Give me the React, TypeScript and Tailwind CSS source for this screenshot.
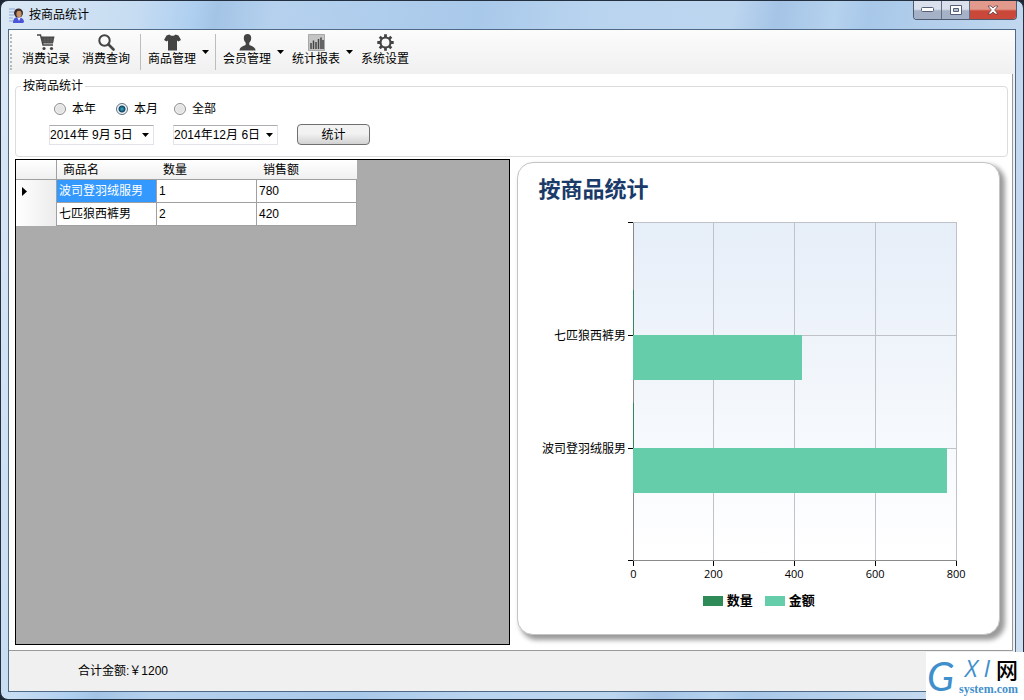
import React from 'react';

interface Product {
  name: string;
  count: number;
  amount: number;
}

interface ToolItem {
  label: string;
  icon: React.ReactNode;
  hasMenu?: boolean;
  separatorAfter?: boolean;
}

const products: Product[] = [
  { name: '波司登羽绒服男', count: 1, amount: 780 },
  { name: '七匹狼西裤男', count: 2, amount: 420 },
];

const AppIcon = () => (
  <svg width="16" height="16" viewBox="0 0 16 16" aria-hidden="true">
    <path d="M0 2h6M0 5h5M0 8h5M0 11h4M0 14h5" stroke="#8ea9d8" strokeWidth="1.2" />
    <path d="M4 16c0-4 2-6 5-6s6 2 6 5l-1 1z" fill="#4a55d8" />
    <path d="M8 10l2 4 2-4z" fill="#eef" />
    <circle cx="9.5" cy="6" r="4.5" fill="#3b2a2a" />
    <ellipse cx="10" cy="7" rx="2.6" ry="3.2" fill="#c68f62" />
  </svg>
);

const CartIcon = () => (
  <svg width="18" height="17" viewBox="0 0 18 17" aria-hidden="true">
    <path d="M0 1h3.5l2.5 10h10" fill="none" stroke="#444" strokeWidth="1.4" />
    <path d="M4 2.5h13.5L16 9.5H6z" fill="#444" />
    <path d="M5 5h12M5.500 7.200h11M8 3v6M11 3v6M14 3v6" stroke="#777" strokeWidth=".5" />
    <circle cx="7" cy="14.500" r="1.600" fill="#444" />
    <circle cx="14.500" cy="14.500" r="1.600" fill="#444" />
  </svg>
);

const SearchIcon = () => (
  <svg width="17" height="17" viewBox="0 0 17 17" fill="none" stroke="#444" aria-hidden="true">
    <circle cx="6.500" cy="6.500" r="5.200" strokeWidth="2" />
    <path d="M10.500 10.500l5 5" strokeWidth="2.600" strokeLinecap="round" />
  </svg>
);

const ShirtIcon = () => (
  <svg width="17" height="17" viewBox="0 0 17 17" fill="#444" aria-hidden="true">
    <path d="M5.500.5c1 1.700 5 1.700 6 0l3 1L17 6l-2.700 1.600-1.300-1V16.500H4V6.600l-1.300 1L0 6l2.500-4.500z" />
  </svg>
);

const UserIcon = () => (
  <svg width="17" height="17" viewBox="0 0 17 17" fill="#444" aria-hidden="true">
    <path d="M8.500 0c2.400 0 3.700 1.600 3.700 4 0 2-.7 3.700-1.900 4.700v2c1 1.200 6.200 1.600 6.200 5.800H.5c0-4.200 5.200-4.600 6.200-5.800v-2C5.500 7.700 4.800 6 4.800 4c0-2.400 1.300-4 3.700-4z" />
  </svg>
);

const ReportIcon = () => (
  <svg width="17" height="17" viewBox="0 0 17 17" aria-hidden="true">
    <path d="M.5.500h16v16H.5z" fill="#c4c4c4" stroke="#a8a8a8" />
    <path d="M3 9v6M5.500 6.500V15M8 8v7M10.500 5v10M13 3.500V15M15 6v9" stroke="#444" strokeWidth="1.500" />
  </svg>
);

const GearIcon = () => (
  <svg width="17" height="17" viewBox="0 0 17 17" fill="none" stroke="#444" aria-hidden="true">
    <circle cx="8.500" cy="8.500" r="5" strokeWidth="2.200" />
    <path
      d="M8.500.3v3M8.500 13.700v3M.3 8.500h3M13.700 8.500h3M2.700 2.700l2.100 2.100M12.200 12.200l2.100 2.100M2.700 14.300l2.100-2.100M12.200 4.800l2.100-2.100"
      strokeWidth="2.800"
    />
  </svg>
);

const DownArrow = () => (
  <svg width="7" height="4" viewBox="0 0 7 4" aria-hidden="true">
    <path d="M0 0h7L3.500 4z" fill="#000" />
  </svg>
);

const tools: ToolItem[] = [
  { label: '消费记录', icon: <CartIcon /> },
  { label: '消费查询', icon: <SearchIcon />, separatorAfter: true },
  { label: '商品管理', icon: <ShirtIcon />, hasMenu: true, separatorAfter: true },
  { label: '会员管理', icon: <UserIcon />, hasMenu: true },
  { label: '统计报表', icon: <ReportIcon />, hasMenu: true },
  { label: '系统设置', icon: <GearIcon /> },
];

const TitleBar = () => (
  <header className="flex h-7 items-start justify-between pl-2">
    <div className="flex h-7 items-center gap-1">
      <AppIcon />
      <h1 className="text-xs">按商品统计</h1>
    </div>
    <div className="mr-1.5 flex h-[19px] overflow-hidden rounded-b border border-t-0 border-[#4d5a70]">
      <button
        type="button"
        aria-label="最小化"
        className="flex w-7 items-center justify-center border-r border-[#5f6c83] bg-linear-to-b from-[#dbe1ec] from-45% to-[#a5b1c7] to-55%"
      >
        <svg width="13" height="6" viewBox="0 0 13 6">
          <rect x=".5" y=".5" width="12" height="4" rx="1" fill="#fff" stroke="#54607a" />
        </svg>
      </button>
      <button
        type="button"
        aria-label="最大化"
        className="flex w-7 items-center justify-center border-r border-[#5f6c83] bg-linear-to-b from-[#dbe1ec] from-45% to-[#a5b1c7] to-55%"
      >
        <svg width="12" height="10" viewBox="0 0 12 10">
          <path d="M.5.500h11v9H.5z" fill="#fff" stroke="#54607a" />
          <path d="M3.500 3.500h5v3h-5z" fill="#b7c1d4" stroke="#54607a" />
        </svg>
      </button>
      <button
        type="button"
        aria-label="关闭"
        className="flex w-[46px] items-center justify-center bg-linear-to-b from-[#e29a8d] from-45% to-[#c9483a] to-55%"
      >
        <svg width="12" height="10" viewBox="0 0 12 10">
          <path d="M1 1h3l2 2 2-2h3L7.700 5 11 9H8L6 7 4 9H1l3.300-4z" fill="#fff" stroke="#6b4048" strokeWidth=".8" />
        </svg>
      </button>
    </div>
  </header>
);

const Toolbar = () => (
  <nav className="flex h-[44px] items-stretch bg-linear-to-b from-[#fcfcfc] to-[#f0f0f0] pl-px">
    <div className="my-1 mr-1 w-px border-l-2 border-dotted border-[#b8b8b8]" />
    {tools.map((tool) => (
      <React.Fragment key={tool.label}>
        <button type="button" className={`flex items-center ${tool.hasMenu ? 'pr-0.5' : ''}`}>
          <span className="flex w-[60px] flex-col items-center pb-1">
            {tool.icon}
            <span className="text-xs leading-4">{tool.label}</span>
          </span>
          {tool.hasMenu && <DownArrow />}
        </button>
        {tool.separatorAfter && <div className="my-1 mr-px ml-1 w-px bg-[#bdbdbd]" />}
      </React.Fragment>
    ))}
  </nav>
);

const RangeRadio = ({ label, checked = false }: { label: string; checked?: boolean }) => (
  <label className="flex items-center gap-1.5">
    <input
      type="radio"
      name="range"
      defaultChecked={checked}
      className="size-3 appearance-none rounded-full border border-[#8e8f8f] bg-[#e4e4e4] shadow-[inset_0_0_0_1px_#f6f6f6] checked:border-[#5b7283] checked:bg-[radial-gradient(circle,#3fb0d8_0,#12435e_3px,#e8eef2_4px)]"
    />
    {label}
  </label>
);

const DateField = ({ label, value }: { label: string; value: string }) => (
  <div className="flex h-5 w-[105px] items-center border border-[#e2e3ea] border-t-[#abadb3] pr-1">
    <input type="text" aria-label={label} defaultValue={value} className="w-0 flex-1 outline-none" />
    <button type="button" aria-label={`选择${label}`}>
      <DownArrow />
    </button>
  </div>
);

const FilterBox = () => (
  <fieldset className="rounded border border-[#dcdcdc] pb-[11px] pl-[33px]">
    <legend className="-ml-7 px-0.5 leading-4">按商品统计</legend>
    <div className="mt-[7px] flex h-4 items-center pl-[5px]">
      <div className="mr-5">
        <RangeRadio label="本年" />
      </div>
      <div className="mr-4">
        <RangeRadio label="本月" checked />
      </div>
      <RangeRadio label="全部" />
    </div>
    <div className="mt-[7px] flex items-center gap-[19px]">
      <DateField label="开始日期" value="2014年 9月 5日" />
      <DateField label="结束日期" value="2014年12月 6日" />
      <button
        type="button"
        className="h-[21px] w-[73px] rounded-sm border border-[#707070] bg-linear-to-b from-[#f2f2f2] from-45% to-[#d2d2d2]"
      >
        统计
      </button>
    </div>
  </fieldset>
);

const ProductTable = () => (
  <div className="border border-black bg-[#ababab]">
    <table className="w-[341px] table-fixed border-separate border-spacing-0 text-left">
      <colgroup>
        <col className="w-[41px]" />
        <col />
        <col />
        <col />
      </colgroup>
      <thead>
        <tr className="h-5 bg-linear-to-b from-white to-[#efefef]">
          <td className="border-r border-b border-[#a0a0a0]" />
          {['商品名', '数量', '销售额'].map((title) => (
            <th key={title} scope="col" className="border-b border-[#a0a0a0] p-0 pl-1.5 font-normal">
              {title}
            </th>
          ))}
        </tr>
      </thead>
      <tbody>
        {products.map((product, index) => (
          <tr key={product.name} className="h-[23px] bg-white">
            <td className="border-r border-[#a0a0a0] bg-linear-to-r from-white to-[#ececec] p-0 pl-1.5">
              {index === 0 && (
                <svg width="5" height="9" viewBox="0 0 5 9" aria-hidden="true">
                  <path d="M0 0l5 4.500L0 9z" fill="#000" />
                </svg>
              )}
            </td>
            <td
              className={`border-r border-b border-[#a0a0a0] p-0 pl-0.5 whitespace-nowrap ${
                index === 0 ? 'bg-[#3399ff] text-white' : ''
              }`}
            >
              {product.name}
            </td>
            <td className="border-r border-b border-[#a0a0a0] p-0 pl-0.5">{product.count}</td>
            <td className="border-r border-b border-[#a0a0a0] p-0 pl-0.5">{product.amount}</td>
          </tr>
        ))}
      </tbody>
    </table>
  </div>
);

const PLOT = { left: 115, top: 15, width: 323, height: 338, max: 800 };
const ticks = [0, 200, 400, 600, 800];

const BarChart = () => {
  const rows = [...products].reverse();
  const band = PLOT.height / 3;
  const bottom = PLOT.top + PLOT.height;
  const right = PLOT.left + PLOT.width;
  const scale = (value: number): number => (value / PLOT.max) * PLOT.width;

  return (
    <svg viewBox="0 0 481 378" className="block w-full" shapeRendering="crispEdges" role="img" aria-label="按商品统计">
      <defs>
        <linearGradient id="plotFill" x1="0" y1="0" x2="0" y2="1">
          <stop offset="0" stopColor="#e6eef8" />
          <stop offset="1" stopColor="#ffffff" />
        </linearGradient>
      </defs>
      <rect x={PLOT.left} y={PLOT.top} width={PLOT.width} height={PLOT.height} fill="url(#plotFill)" />
      {ticks.map((tick) => {
        const x = Math.floor(PLOT.left + scale(tick)) + 0.5;
        return (
          <g key={tick}>
            <line x1={x} x2={x} y1={PLOT.top} y2={bottom} stroke={tick === 0 ? '#8a8a8a' : '#bfc2c8'} />
            <line x1={x} x2={x} y1={bottom} y2={bottom + 6} stroke="#000" />
            <text x={x} y={bottom + 18} textAnchor="middle" className="font-['Open_Sans',sans-serif] text-[11px]">
              {tick}
            </text>
          </g>
        );
      })}
      {[0, 1, 2, 3].map((line) => {
        const y = Math.ceil(PLOT.top + band * line) + 0.5;
        return (
          <g key={line}>
            <line x1={PLOT.left} x2={right + 1} y1={y} y2={y} stroke={line === 3 ? '#8a8a8a' : '#bfc2c8'} />
            <line x1={PLOT.left - 5} x2={PLOT.left} y1={y} y2={y} stroke="#000" />
          </g>
        );
      })}
      {rows.map((row, index) => {
        const y = Math.ceil(PLOT.top + band * (index + 1));
        return (
          <g key={row.name}>
            <rect x={PLOT.left} y={y - 45} width={Math.max(1, scale(row.count))} height="45" fill="#2e8b57" />
            <rect x={PLOT.left} y={y} width={scale(row.amount)} height="45" fill="#66cdaa" />
            <text x={PLOT.left - 7} y={y + 5} textAnchor="end" className="text-xs">
              {row.name}
            </text>
          </g>
        );
      })}
    </svg>
  );
};

const ChartCard = () => (
  <section className="mt-[3px] mr-2 mb-2.5 rounded-2xl border border-[#c4c4c4] bg-white shadow-[4px_4px_5px_1px_#9a9a9a]">
    <h2 className="pt-3 pb-0.5 pl-5 text-[22px] leading-[30px] font-bold text-[#1a3b69]">按商品统计</h2>
    <BarChart />
    <ul className="mt-1.5 flex items-center justify-center gap-3 pb-5 text-[13px] leading-5 font-bold">
      <li className="flex items-center gap-1">
        <span className="h-2.5 w-5 bg-[#2e8b57]" />
        数量
      </li>
      <li className="flex items-center gap-1">
        <span className="h-2.5 w-5 bg-[#66cdaa]" />
        金额
      </li>
    </ul>
  </section>
);

const SiteMark = () => (
  <div className="absolute -right-px -bottom-px flex h-12 w-[98px] items-center justify-between bg-white pr-1.5 pl-px text-[#3f8fcc]">
    <span className="font-[Lato,sans-serif] text-[40px] leading-[48px] italic">G</span>
    <div className="flex flex-col">
      <div className="flex items-center justify-end gap-1.5 font-['Open_Sans',sans-serif] text-2xl leading-[26px] italic">
        <span>X</span>
        <span>I</span>
        <span className="font-['Noto_Sans_CJK_SC',sans-serif] text-[22px] font-medium text-black not-italic">网</span>
      </div>
      <span className="font-['Liberation_Serif',serif] text-xs leading-4 font-bold">system.com</span>
    </div>
  </div>
);

export default function App() {
  return (
    <div className="bg-[#1d2733] font-['Liberation_Sans','Noto_Sans_CJK_SC',sans-serif] text-xs text-black">
      <div className="relative flex min-h-screen flex-col rounded-lg border border-[#24303f] bg-[linear-gradient(100deg,#dbe8f5_0%,#c6dcf2_12%,#aecff0_17%,#a4c4e6_19%,#b5d1ee_24%,#a9c9ea_42%,#b9d4ef_52%,#bdd6f0_64%,#a5c4e6_68%,#b5d2ee_73%,#a8c8e9_76%,#c2d8ef_90%,#cfe0f2_100%)] pb-[7px]">
        <TitleBar />
        <div className="mx-[7px] flex flex-1 flex-col border border-[#4e6a86] bg-[#f0f0f0]">
          <Toolbar />
          <main className="mr-0.5 flex flex-1 flex-col gap-0.5 border-r border-b border-[#9a9a9a] bg-white pt-1 pr-1 pb-[5px] pl-1.5">
            <FilterBox />
            <div className="grid flex-1 grid-cols-[496fr_491fr] gap-[7px]">
              <ProductTable />
              <ChartCard />
            </div>
          </main>
          <footer className="h-10 pl-[69px] leading-10">合计金额:￥1200</footer>
        </div>
        <SiteMark />
      </div>
    </div>
  );
}
